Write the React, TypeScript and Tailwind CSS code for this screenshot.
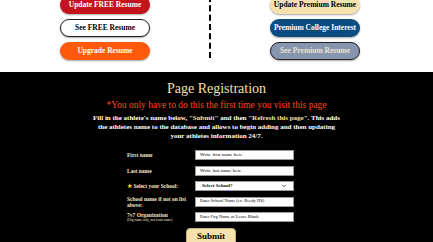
import { ChevronDown } from "lucide-react";

const serif = "font-['Liberation_Serif','DejaVu_Serif',serif]";

function Pill({ label, cls }: { label: string; cls: string }) {
  return (
    <div
      className={`w-[90px] h-[18px] rounded-full flex items-center justify-center text-[7.5px] font-bold shadow-[0_1px_2px_rgba(0,0,0,0.35)] ${cls}`}
    >
      {label}
    </div>
  );
}

function Row({ label, sub, children }: { label: React.ReactNode; sub?: string; children: React.ReactNode }) {
  return (
    <div className="flex items-center h-[10px]">
      <div className="w-[68px] pr-[8px] text-[5.5px] font-bold leading-[6px] text-[#f3e6c8]">
        {label}
        {sub && <div className="text-[3.5px] leading-[5px] font-normal">{sub}</div>}
      </div>
      {children}
    </div>
  );
}

const box = "w-[99px] h-[10px] bg-white border border-[#999] text-black px-[4px] flex items-center";

export default function App() {
  return (
    <div className={`w-[433px] h-[242px] overflow-hidden bg-black ${serif}`}>
      <div className="h-[72px] bg-white overflow-hidden">
        <div className="flex pl-[60px] -mt-[4px]">
          <div className="flex flex-col gap-[5px]">
            <Pill label="Update FREE Resume" cls="bg-[#c4141a] text-white" />
            <Pill label="See FREE Resume" cls="bg-white text-black border-[1.5px] border-[#222]" />
            <Pill label="Upgrade Resume" cls="bg-[#ff5a0a] text-white" />
          </div>
          <div className="ml-[59px] w-0 h-[62px] border-l-2 border-dashed border-black" />
          <div className="ml-[59px] flex flex-col gap-[5px]">
            <Pill label="Update Premium Resume" cls="bg-[#f4e1ad] text-black" />
            <Pill label="Premium College Interest" cls="bg-[#0b4d80] text-white" />
            <Pill label="See Premium Resume" cls="bg-[#8796ae] text-[#e9e2cf] border-[1.5px] border-[#222]" />
          </div>
        </div>
      </div>
      <div className="flex flex-col items-center pt-[8px]">
        <h1 className="text-[14px] leading-[18px] text-[#f4e1ad]">Page Registration</h1>
        <p className="text-[9.5px] leading-[12px] text-[#ff4b0f] mt-[1px]">
          *You only have to do this the first time you visit this page
        </p>
        <p className="w-[248px] text-center text-[7px] leading-[9px] font-bold text-white mt-[3px]">
          Fill in the athlete's name below, <span className="text-[#f4e1ad]">"Submit"</span> and then{" "}
          <span className="text-[#f4e1ad]">"Refresh this page"</span>. This adds the athletes name to the database and
          allows to begin adding and then updating your athletes information 24/7.
        </p>
        <div className="flex flex-col gap-[5.5px] mt-[9px] ml-[-12px]">
          <Row label="First name">
            <div className={`${box} text-[5px]`}>Write first name here</div>
          </Row>
          <Row label="Last name">
            <div className={`${box} text-[5px]`}>Write last name here</div>
          </Row>
          <Row
            label={
              <span>
                <span className="text-[#f5c518]">★</span> Select your School:
              </span>
            }
          >
            <div className={`${box} text-[5px] font-bold justify-between !px-[6px]`}>
              Select School?
              <ChevronDown size={6} strokeWidth={2.5} />
            </div>
          </Row>
          <Row label="School name if not on list above:">
            <div className={`${box} text-[4.5px]`}>Enter School Name (ex. Reedy HS)</div>
          </Row>
          <Row label="7v7 Organization" sub="(Org name only, not team name)">
            <div className={`${box} text-[4.5px]`}>Enter Org Name or Leave Blank</div>
          </Row>
        </div>
        <div className="mt-[6px] ml-[-11px] w-[50px] h-[18px] bg-[#f4e1ad] rounded-t-[4px] border border-[#c9b27a] flex items-center justify-center text-[9px] font-bold text-black">
          Submit
        </div>
      </div>
    </div>
  );
}
